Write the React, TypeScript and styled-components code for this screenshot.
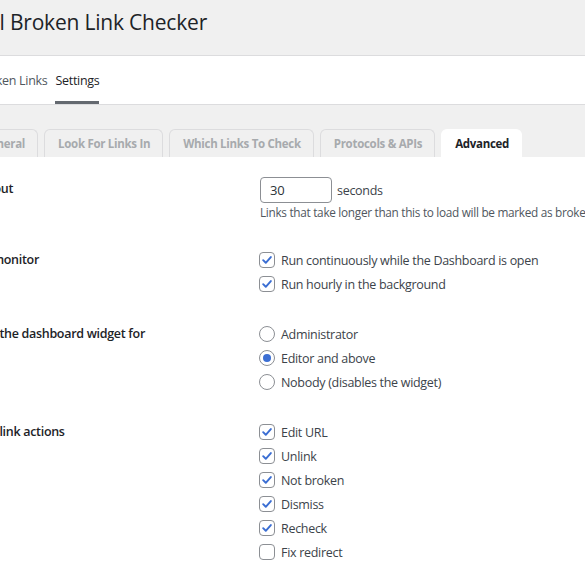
import React from 'react';
import styled, { createGlobalStyle } from 'styled-components';

const GlobalStyle = createGlobalStyle`
  html, body {
    margin: 0;
    padding: 0;
    width: 585px;
    height: 585px;
    overflow: hidden;
    background: #ffffff;
    font-family: "Open Sans", "Noto Sans", "Liberation Sans", sans-serif;
    font-size: 12.5px;
    letter-spacing: -0.3px;
    color: #3c434a;
  }
`;

const tabs = ['General', 'Look For Links In', 'Which Links To Check', 'Protocols & APIs', 'Advanced'];

const linkActions = [
  { label: 'Edit URL', checked: true },
  { label: 'Unlink', checked: true },
  { label: 'Not broken', checked: true },
  { label: 'Dismiss', checked: true },
  { label: 'Recheck', checked: true },
  { label: 'Fix redirect', checked: false },
];

const Checkbox: React.FC<{ checked: boolean }> = ({ checked }) => (
  <CheckBox>
    {checked && (
      <svg width="14" height="14" viewBox="0 0 16 16">
        <polyline points="3.6,8.2 6.6,11.2 12.4,4.6" fill="none" stroke="#3b6ed3" strokeWidth="2.2" strokeLinecap="round" strokeLinejoin="round" />
      </svg>
    )}
  </CheckBox>
);

const App: React.FC = () => {
  return (
    <>
      <GlobalStyle />
      <Page>
        <TitleBar>
          <Title>Local Broken Link Checker</Title>
        </TitleBar>

        <NavBar>
          <NavItem>Broken Links</NavItem>
          <NavItem active>Settings</NavItem>
        </NavBar>

        <TabArea>
          {tabs.map(tab => (
            <Tab key={tab} active={tab === 'Advanced'}>{tab}</Tab>
          ))}
        </TabArea>

        <Form>
          <Row>
            <Label>Timeout</Label>
            <Field>
              <InputLine>
                <NumberInput defaultValue="30" />
                <span>seconds</span>
              </InputLine>
              <Description>Links that take longer than this to load will be marked as broken.</Description>
            </Field>
          </Row>

          <Row>
            <Label>Link monitor</Label>
            <Field>
              <Option><Checkbox checked />Run continuously while the Dashboard is open</Option>
              <Option><Checkbox checked />Run hourly in the background</Option>
            </Field>
          </Row>

          <Row>
            <Label>Show the dashboard widget for</Label>
            <Field>
              <Option><Radio /> Administrator</Option>
              <Option><Radio checked /> Editor and above</Option>
              <Option><Radio /> Nobody (disables the widget)</Option>
            </Field>
          </Row>

          <Row>
            <Label>Show link actions</Label>
            <Field>
              {linkActions.map(action => (
                <Option key={action.label}>
                  <Checkbox checked={action.checked} />
                  {action.label}
                </Option>
              ))}
            </Field>
          </Row>
        </Form>
      </Page>
    </>
  );
};

const Page = styled.div`
  margin-left: -48px;
  width: 720px;
`;

const TitleBar = styled.div`
  height: 55px;
  background: #f0f0f0;
  border-bottom: 1px solid #dcdcde;
  display: flex;
  align-items: center;
  padding-left: 3px;
`;

const Title = styled.h1`
  margin: 0 0 11px 0;
  font-size: 21px;
  font-weight: 400;
  letter-spacing: -0.2px;
  color: #1d2327;
`;

const NavBar = styled.div`
  height: 48px;
  background: #ffffff;
  border-bottom: 1px solid #dcdcde;
  display: flex;
  gap: 8px;
  padding-left: 24px;
`;

const NavItem = styled.div<{ active?: boolean }>`
  display: flex;
  align-items: center;
  color: ${p => (p.active ? '#1d2327' : '#50575e')};
  border-bottom: 3px solid ${p => (p.active ? '#646970' : 'transparent')};
  padding-top: 3px;
`;

const TabArea = styled.div`
  background: #f0f0f0;
  padding: 24px 0 0 16px;
  display: flex;
  gap: 6px;
`;

const Tab = styled.div<{ active?: boolean }>`
  height: 28px;
  box-sizing: border-box;
  padding: 0 12px 0 13px;
  display: flex;
  align-items: center;
  font-size: 11.5px;
  font-weight: 700;
  color: ${p => (p.active ? '#1d2327' : '#a7aaad')};
  background: ${p => (p.active ? '#ffffff' : '#f0f0f0')};
  border: 1px solid ${p => (p.active ? '#ffffff' : '#dcdcde')};
  border-bottom: none;
  border-radius: 6px 6px 0 0;
`;

const Form = styled.div`
  background: #ffffff;
  padding: 7px 0 0 13px;
`;

const Row = styled.div`
  display: grid;
  grid-template-columns: 295px 1fr;
  padding: 13px 0;
`;

const Label = styled.div`
  font-weight: 600;
  line-height: 24px;
  color: #1d2327;
`;

const Field = styled.div`
  display: flex;
  flex-direction: column;
`;

const InputLine = styled.div`
  display: flex;
  align-items: center;
  gap: 5px;
  color: #3c434a;
`;

const NumberInput = styled.input`
  width: 72px;
  height: 26px;
  box-sizing: border-box;
  padding: 0 9px;
  border: 1px solid #8c8f94;
  border-radius: 4px;
  font-family: inherit;
  font-size: 13px;
  letter-spacing: inherit;
  color: #2c3338;
  background: #ffffff;
  outline: none;
`;

const Description = styled.div`
  font-size: 11.8px;
  line-height: 19px;
  color: #50575e;
  white-space: nowrap;
`;

const Option = styled.label`
  display: flex;
  align-items: center;
  gap: 6px;
  height: 24px;
  margin-left: -1px;
  color: #3c434a;
  white-space: nowrap;
`;

const CheckBox = styled.span`
  width: 16px;
  height: 16px;
  box-sizing: border-box;
  border: 1px solid #8c8f94;
  border-radius: 4px;
  background: #ffffff;
  display: inline-flex;
  align-items: center;
  justify-content: center;
  flex-shrink: 0;
`;

const Radio = styled.span<{ checked?: boolean }>`
  width: 16px;
  height: 16px;
  box-sizing: border-box;
  border: 1px solid #8c8f94;
  border-radius: 50%;
  background: #ffffff;
  display: inline-flex;
  align-items: center;
  justify-content: center;
  flex-shrink: 0;
  &::after {
    content: '';
    width: 8px;
    height: 8px;
    border-radius: 50%;
    background: ${p => (p.checked ? '#3b6ed3' : 'transparent')};
  }
`;

export default App;
